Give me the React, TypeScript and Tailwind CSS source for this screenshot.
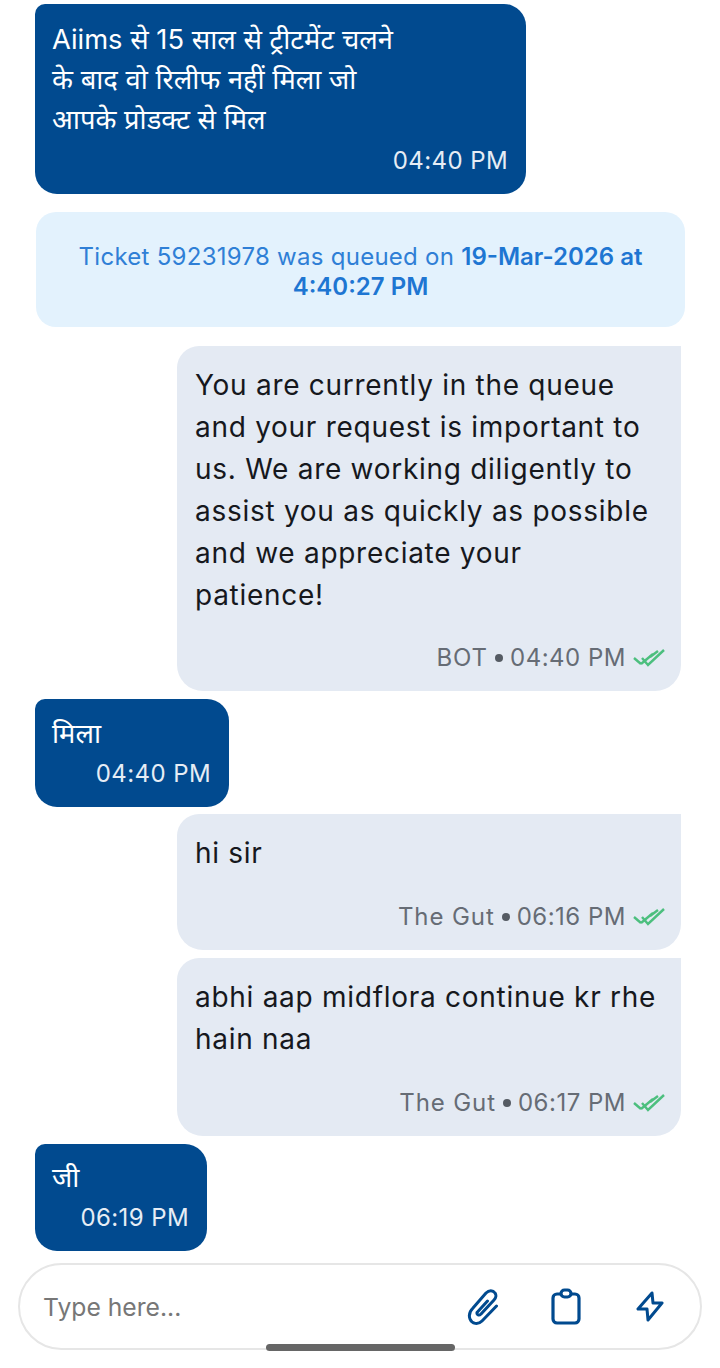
type Msg = { text: string; time: string; width: string; h: string; pt: string; mt: string };

const font = "font-['Inter','Noto_Sans','Noto_Sans_Devanagari',sans-serif]";

function DoubleCheck() {
  return (
    <svg width="32" height="20" viewBox="0 0 32 20" fill="none" stroke="#4cbf7e" strokeWidth="2.4" className="ml-[7px]">
      <path d="M1 10l7 6" />
      <path d="M8 16L20 6" />
      <path d="M9 10l6 7L31 2" />
      <path d="M17 9l8-6" />
    </svg>
  );
}

function ClipIcon() {
  return (
    <svg width="32" height="38" viewBox="7 5 32 38" fill="none" stroke="#014a8f" strokeWidth="3" strokeLinecap="round" strokeLinejoin="round">
      <path d="M36.5 23L22 38C18 42 12 41 10 36C8.5 32 10 28 13 25L26 10C29 7 33 7 35 10C36.5 12 36 15 34 17L21 31C19 33 16.5 32 17 29.5L27.5 18" />
    </svg>
  );
}

function BoardIcon() {
  return (
    <svg width="34" height="38" viewBox="9 4 34 38" fill="none" stroke="#014a8f" strokeWidth="3.2" strokeLinejoin="round">
      <rect x="13" y="10" width="26" height="29" rx="4" />
      <rect x="21" y="6" width="10" height="7" rx="3.5" fill="#fff" />
    </svg>
  );
}

function BoltIcon() {
  return (
    <svg width="28" height="32" viewBox="0 0 28 32" fill="none" stroke="#014a8f" strokeWidth="3" strokeLinejoin="round">
      <path d="M16 2L2 18H11L12 29L26 12H17Z" />
    </svg>
  );
}

function Incoming({ text, time, width, h, pt, mt }: Msg) {
  return (
    <div className={`ml-[35px] flex flex-col ${width} ${h} ${mt} ${pt} rounded-[22px] rounded-tl-[10px] bg-[#014a8f] pb-[18px] pl-[17px] pr-[18px] text-white`}>
      <div className="whitespace-pre-line text-[27.3px] leading-[40px]">{text}</div>
      <div className="mt-auto text-right text-[24px] leading-[30px] tracking-[0.4px] text-[#e6edf5]">{time}</div>
    </div>
  );
}

function Outgoing({ text, who, time, h, mt }: { text: string; who: string; time: string; h: string; mt: string }) {
  return (
    <div className={`ml-[177px] flex w-[504px] flex-col ${h} ${mt} rounded-bl-[26px] rounded-br-[26px] rounded-tl-[22px] bg-[#e4eaf3] pt-[18px] pb-[18px] pl-[18px] pr-[16px]`}>
      <div className="whitespace-pre-line text-[28px] leading-[42px] tracking-[0.72px] text-[#16181d]">{text}</div>
      <div className="mt-auto flex items-center justify-end text-[24px] leading-[30px] tracking-[0.5px] text-[#666c75]">
        <span className="tracking-[0.9px]">{who}</span>
        <span className="mx-[7px] h-[8px] w-[8px] rounded-full bg-[#555b63]" />
        <span>{time}</span>
        <DoubleCheck />
      </div>
    </div>
  );
}

export default function App() {
  return (
    <div className={`relative h-[1368px] w-[720px] overflow-hidden bg-white pt-[4px] ${font}`}>
      <Incoming
        text={"Aiims से 15 साल से ट्रीटमेंट चलने\nके बाद वो रिलीफ नहीं मिला जो\nआपके प्रोडक्ट से मिल"}
        time="04:40 PM"
        width="w-[491px]"
        h="h-[190px]"
        pt="pt-[16px]"
        mt="mt-0"
      />

      <div className="ml-[36px] mt-[18px] h-[115px] w-[649px] rounded-[20px] bg-[#e3f2fd] px-[30px] pt-[30px] text-center text-[24px] leading-[30px] tracking-[0.27px] text-[#2f7fd6]">
        Ticket 59231978 was queued on <span className="font-semibold tracking-normal text-[#1e76d2]">19-Mar-2026 at 4:40:27 PM</span>
      </div>

      <Outgoing
        text={"You are currently in the queue\nand your request is important to\nus. We are working diligently to\nassist you as quickly as possible\nand we appreciate your\npatience!"}
        who="BOT"
        time="04:40 PM"
        h="h-[345px]"
        mt="mt-[19px]"
      />

      <Incoming text="मिला" time="04:40 PM" width="w-[194px]" h="h-[108px]" pt="pt-[15px]" mt="mt-[8px]" />

      <Outgoing text="hi sir" who="The Gut" time="06:16 PM" h="h-[136px]" mt="mt-[7px]" />

      <Outgoing
        text={"abhi aap midflora continue kr rhe\nhain naa"}
        who="The Gut"
        time="06:17 PM"
        h="h-[178px]"
        mt="mt-[8px]"
      />

      <Incoming text="जी" time="06:19 PM" width="w-[172px]" h="h-[107px]" pt="pt-[14px]" mt="mt-[8px]" />

      <div className="ml-[18px] mt-[12px] flex h-[87px] w-[684px] items-center rounded-[44px] border-2 border-[#e6e6e6] bg-white pl-[23px] pr-[36px]">
        <span className="flex-1 pt-[2px] text-[24.7px] text-[#777777]">Type here...</span>
        <ClipIcon />
        <span className="ml-[50px]">
          <BoardIcon />
        </span>
        <span className="ml-[53px]">
          <BoltIcon />
        </span>
      </div>

      <div className="absolute left-[266px] top-[1344px] h-[7px] w-[189px] rounded-full bg-[#666666]" />
    </div>
  );
}
